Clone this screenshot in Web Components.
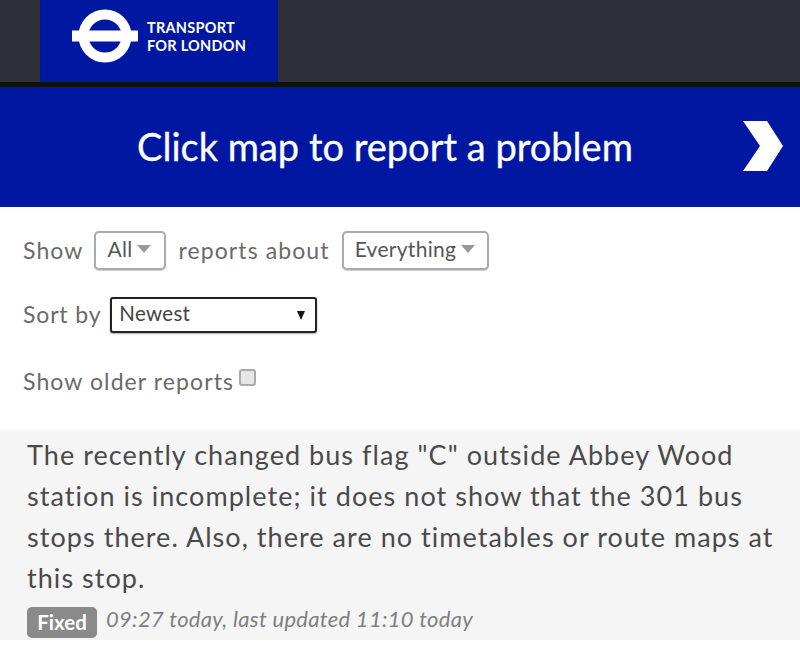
<!DOCTYPE html>
<html><head><meta charset="utf-8"><style>
html,body{margin:0;padding:0;background:#fff;overflow:hidden;height:650px}
body{font-family:Lato,"Open Sans",sans-serif;color:#666}
</style></head><body>
<site-header></site-header>
<map-banner>Click map to report a problem</map-banner>
<report-filters></report-filters>
<report-item status="Fixed" meta="09:27 today, last updated 11:10 today">The recently changed bus flag "C" outside Abbey Wood station is incomplete; it does not show that the 301 bus stops there. Also, there are no timetables or route maps at this stop.</report-item>
<script>
function def(name,html,init){customElements.define(name,class extends HTMLElement{
  constructor(){super();this.attachShadow({mode:'open'}).innerHTML=html;}
  connectedCallback(){init&&init(this);}
});}
def('site-header',`<style>
:host{display:block;height:82px;background:#2e3038;border-bottom:5px solid #0f1012;padding-left:40px}
.logo{width:238px;height:82px;background:#0017a2;display:flex;align-items:center;padding:0 0 10px 32px;box-sizing:border-box;gap:9px}
svg{display:block;flex:none}
.t{color:#fff;font:700 14.5px/18px Lato,sans-serif;letter-spacing:.25px;margin-top:1px}
</style><div class="logo"><svg width="66" height="54" viewBox="0 0 66 54"><circle cx="33" cy="27" r="21.5" fill="none" stroke="#fff" stroke-width="10"/><rect x="0" y="21.5" width="66" height="11" fill="#fff"/></svg><div class="t">TRANSPORT<br>FOR LONDON</div></div>`);
def('map-banner',`<style>
:host{display:flex;height:120px;background:#0017a2;align-items:center;justify-content:center;position:relative;color:#fff;font:400 38px/1 Lato,sans-serif;-webkit-text-stroke:.3px #fff}
span{margin-left:-30px;margin-top:-2px}
svg{position:absolute;left:743px;top:34px}
</style><span><slot></slot></span><svg width="40" height="50" viewBox="0 0 40 50"><path d="M0 0H24L40 25L24 50H0L17 25Z" fill="#fff"/></svg>`);
def('fake-select',`<style>
:host{display:inline-flex;align-items:center;box-sizing:border-box;height:39px;background:#fff;border:2px solid #aaa;border-radius:5px;color:#555;font:400 21px/1 Lato,sans-serif;padding:0 12px 5px 11px;gap:5px;box-shadow:0 1px 1px #ccc}
:host(.a){padding-right:13px}
i{width:0;height:0;border:8px solid transparent;border-top:8px solid #999;border-bottom:0;border-left-width:7.5px;border-right-width:7.5px;margin-top:2px}
</style><slot></slot><i></i>`);
def('sort-select',`<style>
:host{display:inline-flex;align-items:center;justify-content:space-between;box-sizing:border-box;width:207px;height:36px;background:#fff;border:2px solid #222;border-radius:3px;color:#444;font:400 20.5px/1 Lato,sans-serif;padding:0 10px 3px 7px;box-shadow:0 1px 2px #aaa}
i{width:0;height:0;border:4.5px solid transparent;border-top:9px solid #111;border-bottom:0;margin-top:3px}
</style><span><slot></slot></span><i></i>`);
def('report-filters',`<style>
:host{display:flex;flex-direction:column;box-sizing:border-box;height:223px;padding:24px 0 0 23px;font:400 23px/1 Lato,sans-serif;color:#6a6a6a;letter-spacing:1.1px}
.row{display:flex;align-items:center}
.r1{height:39px}.r1 .a{margin-left:11px}.r1 .b{margin:0 12px}
.r2{height:36px;margin-top:27px}.r2 sort-select{margin-left:9px}.r2>span{letter-spacing:.85px;margin-top:-1px}
.r3{margin-top:36px;height:24px}
.cb{width:17px;height:17px;box-sizing:border-box;border:2px solid #aaa;border-radius:3px;background:#e6e6e6;margin:-7px 0 0 5px}
fake-select,sort-select{letter-spacing:.3px}
</style>
<div class="row r1"><span>Show</span><fake-select class="a">All</fake-select><span class="b">reports about</span><fake-select>Everything</fake-select></div>
<div class="row r2"><span>Sort by</span><sort-select>Newest</sort-select></div>
<div class="row r3"><span>Show older reports</span><div class="cb"></div></div>`);
def('report-item',`<style>
:host{display:block;box-sizing:border-box;height:210px;background:#f5f5f5;padding:4px 10px 0 27px}
p{margin:0;font:400 27px/41px Lato,sans-serif;color:#4a4a4a;letter-spacing:1.05px}
.m{display:flex;align-items:center;margin-top:9px;gap:9px}
b{display:block;background:#8a8a8a;color:#fff;border-radius:5px;font:700 20.5px/31px Lato,sans-serif;width:70px;text-align:center}
em{font:italic 400 22px/1 Lato,sans-serif;color:#808080;letter-spacing:.3px;margin-top:-7px}
</style><p><slot></slot></p><div class="m"><b></b><em></em></div>`,el=>{
 el.shadowRoot.querySelector('b').textContent=el.getAttribute('status');
 el.shadowRoot.querySelector('em').textContent=el.getAttribute('meta');
});
</script>
</body></html>
